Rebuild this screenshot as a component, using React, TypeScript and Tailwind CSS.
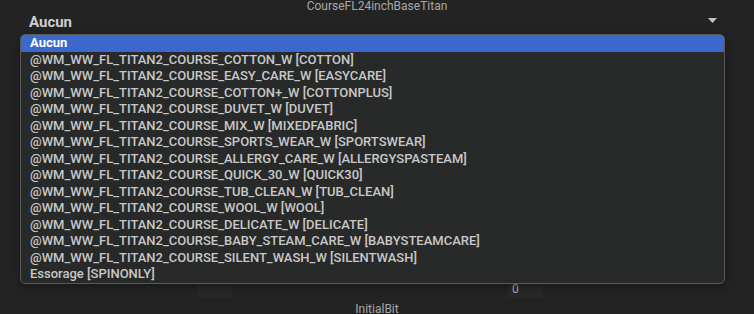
import { useState } from 'react';

const OPTIONS = [
  'Aucun',
  '@WM_WW_FL_TITAN2_COURSE_COTTON_W [COTTON]',
  '@WM_WW_FL_TITAN2_COURSE_EASY_CARE_W [EASYCARE]',
  '@WM_WW_FL_TITAN2_COURSE_COTTON+_W [COTTONPLUS]',
  '@WM_WW_FL_TITAN2_COURSE_DUVET_W [DUVET]',
  '@WM_WW_FL_TITAN2_COURSE_MIX_W [MIXEDFABRIC]',
  '@WM_WW_FL_TITAN2_COURSE_SPORTS_WEAR_W [SPORTSWEAR]',
  '@WM_WW_FL_TITAN2_COURSE_ALLERGY_CARE_W [ALLERGYSPASTEAM]',
  '@WM_WW_FL_TITAN2_COURSE_QUICK_30_W [QUICK30]',
  '@WM_WW_FL_TITAN2_COURSE_TUB_CLEAN_W [TUB_CLEAN]',
  '@WM_WW_FL_TITAN2_COURSE_WOOL_W [WOOL]',
  '@WM_WW_FL_TITAN2_COURSE_DELICATE_W [DELICATE]',
  '@WM_WW_FL_TITAN2_COURSE_BABY_STEAM_CARE_W [BABYSTEAMCARE]',
  '@WM_WW_FL_TITAN2_COURSE_SILENT_WASH_W [SILENTWASH]',
  'Essorage [SPINONLY]',
];

export default function App() {
  const [selected, setSelected] = useState(0);

  return (
    <div className="relative h-[314px] w-[754px] overflow-hidden bg-[#232323] font-['Roboto',sans-serif] text-[#c8c8c8]">
      {/* Header */}
      <div className="text-center text-[12px] leading-[12px] text-[#a8a8a8]">CourseFL24inchBaseTitan</div>

      {/* Select */}
      <div className="mt-[1px] flex h-[18px] items-center justify-between pl-[29px] pr-[37px]">
        <span className="text-[15px] font-bold leading-[18px] text-[#cfcfcf]">{OPTIONS[selected]}</span>
        <svg width="9" height="5" viewBox="0 0 9 5" className="-mt-[3px]">
          <path d="M0 0 H9 L4.5 5 Z" fill="#c4c4c4" />
        </svg>
      </div>

      {/* Fields under the popup */}
      <div className="mt-[252px] flex h-[15px] items-start">
        <div className="ml-[197px] h-[15px] w-[35px] bg-[#272727]" />
        <div className="ml-[276px] h-[15px] w-[35px] bg-[#272727] pl-[4px] text-[12px] leading-[12px] text-[#a8a8a8]">0</div>
      </div>
      <div className="mt-[4px] text-center text-[12px] leading-[14px] text-[#a8a8a8]">InitialBit</div>

      {/* Popup list */}
      <div className="absolute left-[20px] top-[34px] w-[705px] overflow-hidden rounded-[5px] border border-[#5a5a5a] bg-[#282a2a] shadow-[0_2px_6px_rgba(0,0,0,0.4)]">
        {OPTIONS.map((opt, i) => (
          <div
            key={opt}
            onClick={() => setSelected(i)}
            className={
              i === selected
                ? 'h-[16.5px] bg-[#3b68cc] pl-[9px] text-[13px] font-bold leading-[16.5px] text-white'
                : 'h-[16.5px] pl-[9px] text-[13px] font-medium leading-[16.5px] text-[#c8c8c8]'
            }
          >
            {opt}
          </div>
        ))}
      </div>
    </div>
  );
}
